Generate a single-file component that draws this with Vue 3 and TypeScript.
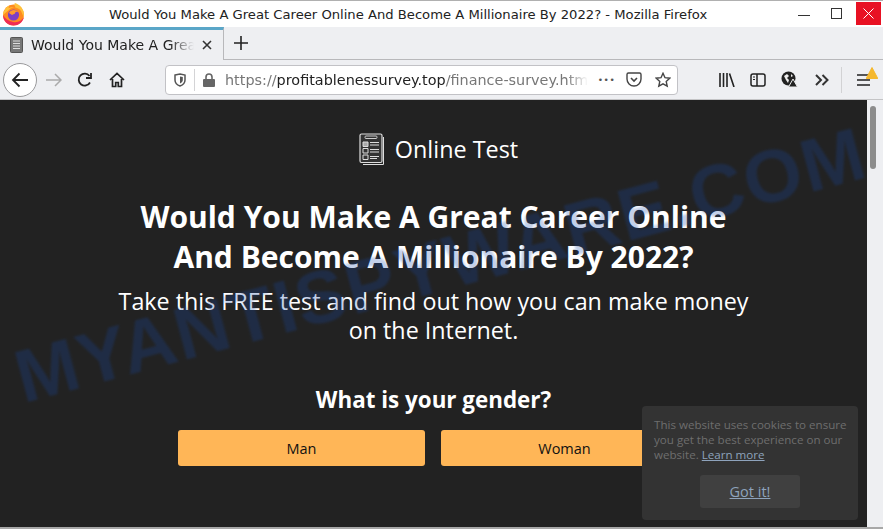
<script setup lang="ts">
const title = 'Would You Make A Great Career Online And Become A Millionaire By 2022?'
const genders = ['Man', 'Woman']
</script>

<template>
  <div class="window">
    <div class="titlebar">
      <svg class="ff-logo" width="24" height="24" viewBox="0 0 24 24">
        <circle cx="12.5" cy="13" r="10.500" fill="#ff8a1f" />
        <path d="M2 13c.2-2 .8-4 2-5.500 1-2 3-3.500 5-4.200-1 1-1.500 2-1.500 3C10 5 13 5 15.500 6.500 13 3.500 13 2 14 1c5 1.500 9 6 9 12 0 .8 0 1.500-.2 2.200L20 9c-2-3-7-4.500-10.500-2.500z" fill="#ffc13a" />
        <path d="M2 13c0 6 4.500 10.500 10.500 10.500 5 0 9.500-3.500 10.500-8.500-2 3.500-6 6-11 5-4.500-1-8-3.500-10-7z" fill="#ee2d55" />
        <circle cx="12.500" cy="13" r="5.600" fill="#7d3fc4" />
        <path d="M8 11c1.500-3.500 7-4 9.500-.5-2-1.500-3.500-.5-3.500 1l-3 1.500c-1-.7-2-1.200-3-2z" fill="#ff9a2e" />
      </svg>
      <span class="win-title">{{ title }} - Mozilla Firefox</span>
      <div class="win-controls">
        <span class="win-min"></span>
        <span class="win-max"></span>
        <span class="win-close">
          <svg width="11" height="11" viewBox="0 0 11 11"><path d="M.5.5l10 10M10.500.5l-10 10" stroke="#fff" stroke-width="1" /></svg>
        </span>
      </div>
    </div>

    <div class="tabbar">
      <div class="tab">
        <svg width="13" height="16" viewBox="0 0 13 16">
          <rect x=".5" y=".5" width="12" height="15" rx="1" fill="#777" stroke="#555" />
          <path d="M3 4h7M3 6.500h7M3 9h7M3 11.500h7" stroke="#ddd" />
        </svg>
        <span class="tab-label">Would You Make A Great Career Online</span>
        <svg width="10" height="10" viewBox="0 0 10 10"><path d="M1 1l8 8M9 1l-8 8" stroke="#333" stroke-width="1.600" /></svg>
      </div>
      <svg class="new-tab" width="14" height="14" viewBox="0 0 14 14"><path d="M7 0v14M0 7h14" stroke="#222" stroke-width="1.600" /></svg>
    </div>

    <div class="navbar">
      <div class="nav-back">
        <svg width="18" height="16" viewBox="0 0 18 16"><path d="M17 8H2M8.500 1.500L2 8l6.500 6.500" fill="none" stroke="#222" stroke-width="1.800" /></svg>
      </div>
      <svg class="nav-forward" width="16" height="14" viewBox="0 0 16 14"><path d="M0 7h15M9 1l6 6-6 6" fill="none" stroke="#aaa" stroke-width="1.500" /></svg>
      <svg class="nav-reload" width="16" height="16" viewBox="0 0 16 16"><path d="M13 10.500A6 6 0 1 1 12.500 4M14 1v5H9" fill="none" stroke="#222" stroke-width="1.800" /></svg>
      <svg class="nav-home" width="16" height="16" viewBox="0 0 16 16"><path d="M1 8l7-6.500L15 8M3.500 7v7.500h3.200v-4h2.600v4h3.200V7" fill="none" stroke="#222" stroke-width="1.700" /></svg>
      <div class="urlbar">
        <svg width="12" height="14" viewBox="0 0 12 14"><path d="M1 2l5-1 5 1v5c0 3-2 5-5 6-3-1-5-3-5-6z" fill="none" stroke="#555" stroke-width="1.500" /><path d="M6 3.500l2.800.6V7c0 1.500-1 2.700-2.800 3.500z" fill="#555" /></svg>
        <span class="url-sep"></span>
        <svg class="url-lock" width="12" height="14" viewBox="0 0 12 14"><path d="M3 6V4a3 3 0 0 1 6 0v2" fill="none" stroke="#666" stroke-width="1.600" /><rect y="6" width="12" height="8" rx="1" fill="#666" /></svg>
        <span class="url-text">https://<b>profitablenessurvey.top</b>/finance-survey.htm</span>
        <span class="url-dots">•••</span>
        <svg class="url-pocket" width="16" height="15" viewBox="0 0 16 15"><path d="M1 2.500A1.500 1.500 0 0 1 2.500 1h11A1.500 1.500 0 0 1 15 2.500V7a7 7 0 0 1-14 0z" fill="none" stroke="#444" stroke-width="1.400" /><path d="M5 6l3 3 3-3" fill="none" stroke="#444" stroke-width="1.600" /></svg>
        <svg class="url-star" width="16" height="16" viewBox="0 0 16 16"><path d="M8 1.300l2 4.400 4.800.5-3.600 3.200 1 4.800L8 11.800l-4.200 2.400 1-4.800L1.200 6.200 6 5.700z" fill="none" stroke="#444" stroke-width="1.400" /></svg>
      </div>
      <div class="nav-tools">
        <svg width="16" height="14" viewBox="0 0 16 14"><path d="M1 0v14M4.500 0v14M8 0v14M10.500.5l4.500 13.500" fill="none" stroke="#222" stroke-width="1.600" /></svg>
        <svg width="16" height="14" viewBox="0 0 16 14"><rect x="1" y="1" width="14" height="12" rx="2" fill="none" stroke="#222" stroke-width="1.500" /><path d="M7 1v12" stroke="#222" stroke-width="1.500" /><path d="M3 4h2M3 6.500h2" stroke="#222" /></svg>
        <svg width="17" height="17" viewBox="0 0 17 17"><circle cx="7.500" cy="7.500" r="7" fill="#222" /><path d="M3 5l3-2 2 2-2 2 2 2-1 3-2-3zM10 3l2 2-2 1z" fill="#eee" /><path d="M12 8l4.500 8h-9z" fill="#222" stroke="#eee" /></svg>
        <svg class="tool-more" width="14" height="12" viewBox="0 0 14 12"><path d="M1 1l5 5-5 5M7.500 1l5 5-5 5" fill="none" stroke="#333" stroke-width="2" /></svg>
      </div>
      <span class="nav-sep"></span>
      <div class="nav-menu">
        <svg width="13" height="12" viewBox="0 0 13 12"><path d="M0 1h13M0 6h13M0 11h13" stroke="#222" stroke-width="1.500" /></svg>
        <svg class="menu-alert" width="12" height="12" viewBox="0 0 12 12"><path d="M6 .5l5.800 11H.2z" fill="#f5b82e" stroke="#f5b82e" stroke-linejoin="round" /></svg>
      </div>
    </div>

    <div class="viewport">
      <main class="page">
        <div class="brand">
          <svg width="26" height="33" viewBox="0 0 26 33">
            <path d="M24.500 4v27.500H4" fill="none" stroke="#ddd" stroke-width="1" />
            <rect x="1" y="1" width="22" height="28.500" rx="1.500" fill="#333" stroke="#ddd" stroke-width="1.200" />
            <rect x="6" y="3" width="12" height="2.500" rx="1" fill="none" stroke="#ccc" />
            <path d="M4 9h5v4.500H4z" fill="#aaa" stroke="#ddd" />
            <path d="M4 15.500h5V20H4zM4 22h5v4.500H4z" fill="none" stroke="#ddd" />
            <path d="M11 9.500h9M11 12h9M11 16.500h9M11 19h9M11 23.500h9M11 25.500h7" stroke="#ddd" />
          </svg>
          <span>Online Test</span>
        </div>
        <h1>Would You Make A Great Career Online<br />And Become A Millionaire By 2022?</h1>
        <p class="lead">Take this FREE test and find out how you can make money on the Internet.</p>
        <h2>What is your gender?</h2>
        <div class="choices">
          <button v-for="g in genders" :key="g" type="button">{{ g }}</button>
        </div>
      </main>
      <div class="scrollbar"><span class="thumb"></span></div>

      <aside class="cookie">
        <p>This website uses cookies to ensure you get the best experience on our website. <a href="#">Learn more</a></p>
        <a class="got-it" href="#"><span>Got it!</span></a>
      </aside>
    </div>

    <div class="watermark">MYANTISPYWARE.COM</div>
  </div>
</template>

<style>
html, body { margin: 0; overflow: hidden; }
</style>

<style scoped>
.window {
  position: relative;
  width: 883px;
  height: 529px;
  overflow: hidden;
  display: flex;
  flex-direction: column;
  font-family: "DejaVu Sans", sans-serif;
  background: #eeeff2;
  border-top: 1px solid #b0b0b0;
  border-bottom: 2px solid #a8a8a8;
  box-sizing: border-box;
}

.titlebar {
  height: 26px;
  flex: none;
  display: flex;
  align-items: center;
  background: #fff;
  position: relative;
  padding-left: 109px;
  font-size: 13.150px;
  color: #222;
}
.ff-logo { position: absolute; left: 1px; top: 1px; }
.win-title { white-space: nowrap; }
.win-controls {
  position: absolute;
  right: 2px;
  top: 1px;
  display: flex;
  align-items: center;
  gap: 21px;
}
.win-min { width: 12px; height: 1px; background: #333; margin-top: 3px; }
.win-max { width: 9px; height: 9px; border: 1px solid #333; }
.win-close {
  width: 25px;
  height: 23px;
  margin-left: -7px;
  background: #e81123;
  display: flex;
  align-items: center;
  justify-content: center;
}

.tabbar {
  height: 33px;
  flex: none;
  display: flex;
  align-items: center;
  border-bottom: 1px solid #b8b8bb;
  box-sizing: border-box;
}
.tab {
  width: 224px;
  height: 33px;
  box-sizing: border-box;
  margin-bottom: -1px;
  display: flex;
  align-items: center;
  gap: 8px;
  padding: 0 10px;
  background: #eeeff2;
  border-top: 3px solid #5aa6c8;
  border-right: 1px solid #b8b8bb;
  font-size: 14px;
  color: #222;
}
.tab svg { flex: none; }
.tab-label {
  width: 163px;
  white-space: nowrap;
  overflow: hidden;
  -webkit-mask-image: linear-gradient(to right, #000 85%, transparent);
  mask-image: linear-gradient(to right, #000 85%, transparent);
}
.new-tab { margin-left: 10px; }

.navbar {
  height: 40px;
  flex: none;
  display: flex;
  align-items: center;
  padding-left: 3px;
  border-bottom: 1px solid #c4c4c6;
  box-sizing: border-box;
}
.nav-back {
  width: 32px;
  height: 32px;
  border: 1px solid #9a9a9c;
  border-radius: 50%;
  background: #fff;
  display: flex;
  align-items: center;
  justify-content: center;
  flex: none;
}
.nav-forward { margin-left: 9px; }
.nav-reload { margin-left: 15px; }
.nav-home { margin-left: 16px; }
.urlbar {
  width: 513px;
  height: 30px;
  margin-left: 40px;
  flex: none;
  box-sizing: border-box;
  border: 1px solid #c2c2c6;
  border-radius: 4px;
  background: #fff;
  display: flex;
  align-items: center;
  padding: 0 6px 0 8px;
  font-size: 14.400px;
  color: #777;
}
.url-sep { width: 1px; height: 22px; background: #d4d4d6; margin: 0 8px; }
.url-text {
  width: 363px;
  margin-left: 10px;
  white-space: nowrap;
  overflow: hidden;
  -webkit-mask-image: linear-gradient(to right, #000 94%, transparent);
  mask-image: linear-gradient(to right, #000 94%, transparent);
}
.url-text b { font-weight: 400; color: #222; }
.url-dots { width: 35px; text-align: center; font-size: 9px; letter-spacing: 0.500px; color: #555; margin-left: 1px; }
.url-pocket { margin-left: 2px; }
.url-star { margin-left: 13px; }
.nav-tools {
  display: flex;
  align-items: center;
  gap: 15px;
  margin-left: 41px;
}
.tool-more { margin-left: 2px; }
.nav-sep { width: 1px; height: 26px; background: #d2d2d4; margin-left: 12px; }
.nav-menu { position: relative; margin-left: 15px; line-height: 0; }
.menu-alert { position: absolute; left: 9px; top: -7px; }

.viewport {
  flex: 1;
  display: flex;
  position: relative;
  min-height: 0;
}
.page {
  flex: 1;
  background: #222;
  color: #fff;
  font-family: "Open Sans", "DejaVu Sans", sans-serif;
  text-align: center;
  padding-top: 32px;
  box-sizing: border-box;
}
.brand {
  display: flex;
  justify-content: center;
  align-items: center;
  gap: 10px;
  font-size: 23.400px;
  height: 34px;
  padding-left: 10px;
}
h1 {
  margin: 31px auto 0;
  font-size: 30px;
  line-height: 40px;
  font-weight: 700;
}
.lead {
  margin: 10px auto 0;
  width: 660px;
  font-size: 23.300px;
  line-height: 29px;
}
h2 {
  margin: 39px 0 0;
  font-size: 22.400px;
  line-height: 32px;
  font-weight: 700;
}
.choices {
  display: flex;
  justify-content: center;
  gap: 16px;
  margin-top: 14px;
  padding-right: 1px;
}
button {
  width: 247px;
  height: 36px;
  border: 0;
  border-radius: 3px;
  background: #ffb657;
  color: #111;
  font: 14.500px "Open Sans", "DejaVu Sans", sans-serif;
}
.scrollbar {
  width: 16px;
  flex: none;
  background: #eeeff2;
  position: relative;
}
.thumb {
  position: absolute;
  left: 3px;
  top: 6px;
  width: 6px;
  height: 63px;
  border-radius: 3px;
  background: #8c8c8c;
}
.cookie {
  position: absolute;
  left: 642px;
  top: 306px;
  width: 216px;
  height: 114px;
  box-sizing: border-box;
  padding: 11px 8px 12px 12px;
  background: #333;
  border-radius: 4px;
  font-family: "Open Sans", "DejaVu Sans", sans-serif;
  font-size: 11.600px;
  line-height: 15px;
  color: #6e6e6e;
}
.cookie p { margin: 0; }
.cookie a { color: #8ea3bc; }
.got-it {
  display: flex;
  align-items: center;
  justify-content: center;
  width: 100px;
  height: 33px;
  margin: 13px 0 0 46px;
  border-radius: 3px;
  background: #404040;
  font-size: 14.500px;
}
.watermark {
  position: absolute;
  left: 2px;
  top: 225px;
  width: 866px;
  font-family: "Liberation Sans", sans-serif;
  font-weight: 700;
  font-size: 75px;
  line-height: 80px;
  white-space: nowrap;
  letter-spacing: 1.500px;
  color: rgba(22, 72, 170, 0.26);
  transform: rotate(-15deg);
  transform-origin: center;
  filter: blur(1px);
  pointer-events: none;
}
</style>
